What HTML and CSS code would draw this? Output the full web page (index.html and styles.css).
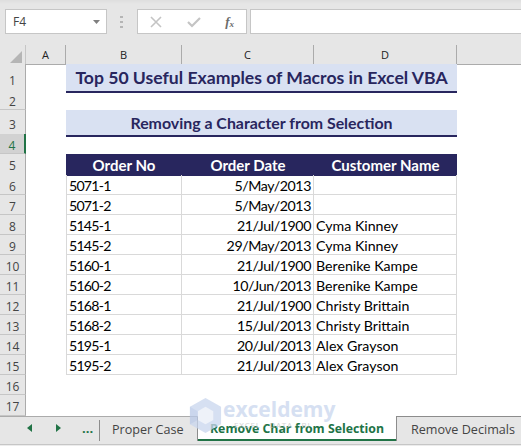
FILE: index.html
```html
<!DOCTYPE html>
<html lang="en">
<head>
  <meta charset="UTF-8" />
  <title>Remove Char from Selection</title>
  <link rel="stylesheet" href="styles.css">
</head>
<body>
  <!-- Formula bar -->
  <div class="formula-bar">
    <div class="name-box">
      <span>F4</span>
      <svg class="caret" width="7" height="4" viewBox="0 0 7 4"><path d="M0 0h7L3.5 4z" fill="#7f7f7f"/></svg>
    </div>
    <div class="grip"><i></i><i></i><i></i></div>
    <div class="fx-buttons">
      <svg width="12" height="12" viewBox="0 0 12 12"><path d="M1 1l10 10M11 1L1 11" stroke="#c4c4c4" stroke-width="1.6" fill="none"/></svg>
      <svg width="14" height="12" viewBox="0 0 14 12"><path d="M1 6l4 4 8-8" stroke="#c4c4c4" stroke-width="2.2" fill="none"/></svg>
      <span class="fx">f<sub>x</sub></span>
    </div>
    <div class="formula-input"></div>
  </div>

  <!-- Sheet -->
  <div class="sheet">
    <div class="row col-heads">
      <div class="corner"><svg width="12" height="12" viewBox="0 0 12 12"><path d="M12 0v12H0z" fill="#b5b5b5"/></svg></div>
      <div class="col-head">A</div>
      <div class="col-head">B</div>
      <div class="col-head">C</div>
      <div class="col-head">D</div>
    </div>

    <div class="row h26"><div class="num">1</div><div class="title">Top 50 Useful Examples of Macros in Excel VBA</div></div>
    <div class="row"><div class="num">2</div></div>
    <div class="row h24"><div class="num">3</div><div class="subtitle">Removing a Character from Selection</div></div>
    <div class="row"><div class="num active">4</div></div>
    <div class="row h21">
      <div class="num">5</div><div></div>
      <div class="th">Order No</div><div class="th">Order Date</div><div class="th">Customer Name</div>
    </div>

    <div class="row"><div class="num">6</div><div></div><div class="td order">5071-1</div><div class="td right">5/May/2013</div><div class="td"></div></div>
    <div class="row"><div class="num">7</div><div></div><div class="td order">5071-2</div><div class="td right">5/May/2013</div><div class="td"></div></div>
    <div class="row"><div class="num">8</div><div></div><div class="td order">5145-1</div><div class="td right">21/Jul/1900</div><div class="td">Cyma Kinney</div></div>
    <div class="row"><div class="num">9</div><div></div><div class="td order">5145-2</div><div class="td right">29/May/2013</div><div class="td">Cyma Kinney</div></div>
    <div class="row"><div class="num">10</div><div></div><div class="td order">5160-1</div><div class="td right">21/Jul/1900</div><div class="td">Berenike Kampe</div></div>
    <div class="row"><div class="num">11</div><div></div><div class="td order">5160-2</div><div class="td right">10/Jun/2013</div><div class="td">Berenike Kampe</div></div>
    <div class="row"><div class="num">12</div><div></div><div class="td order">5168-1</div><div class="td right">21/Jul/1900</div><div class="td">Christy Brittain</div></div>
    <div class="row"><div class="num">13</div><div></div><div class="td order">5168-2</div><div class="td right">15/Jul/2013</div><div class="td">Christy Brittain</div></div>
    <div class="row"><div class="num">14</div><div></div><div class="td order">5195-1</div><div class="td right">20/Jul/2013</div><div class="td">Alex Grayson</div></div>
    <div class="row"><div class="num">15</div><div></div><div class="td order">5195-2</div><div class="td right">21/Jul/2013</div><div class="td">Alex Grayson</div></div>

    <div class="row"><div class="num">16</div></div>
    <div class="row h21"><div class="num">17</div></div>
  </div>

  <!-- Sheet tabs -->
  <div class="tabs">
    <div class="tab-nav">
      <svg width="5" height="8" viewBox="0 0 5 8"><path d="M5 0v8L0 4z" fill="#217346"/></svg>
      <svg width="5" height="8" viewBox="0 0 5 8"><path d="M0 0v8l5-4z" fill="#217346"/></svg>
      <span class="more">...</span>
    </div>
    <div class="tab plain">Proper Case</div>
    <div class="tab active">Remove Char from Selection</div>
    <div class="tab raised">Remove Decimals</div>
  </div>
  <div class="status-bar"></div>

  <!-- Watermark -->
  <div class="watermark">
    <svg width="33" height="35" viewBox="0 0 32 36">
      <path d="M16 0l16 9v18l-16 9L0 27V9z" fill="#c9d6ee"/>
      <path d="M16 9l8 4.500v9L16 27l-8-4.500v-9z" fill="#e9eef8"/>
      <path d="M0 9l8 4.500v9L0 27z" fill="#b9c9e8"/>
    </svg>
    <div class="mark-text">
      <div class="mark-name">exceldemy</div>
      <div class="mark-sub">EXCEL · DATA · BI</div>
    </div>
  </div>
</body>
</html>
```

FILE: styles.css
```css
/* Global page styling */
html, body {
  margin: 0;
  padding: 0;
  background: #ffffff;
}

body {
  width: 521px;
  height: 446px;
  overflow: hidden;
  position: relative;
  font-family: 'Lato', sans-serif;
}

/* Formula bar */
.formula-bar {
  height: 45px;
  box-sizing: border-box;
  padding: 9px 0 11px 5px;
  background: linear-gradient(#dedede, #e6e6e6 4px);
  display: flex;
  align-items: stretch;
}

.name-box {
  width: 102px;
  box-sizing: border-box;
  background: #ffffff;
  border: 1px solid #c6c6c6;
  display: flex;
  align-items: center;
  justify-content: space-between;
  padding: 0 6px 0 7px;
  font-family: 'Open Sans', sans-serif;
  font-size: 12px;
  color: #444;
}

.grip {
  width: 3px;
  margin: 0 14px 0 13px;
  display: flex;
  flex-direction: column;
  justify-content: center;
  gap: 3px;
}

.grip i {
  display: block;
  width: 3px;
  height: 2px;
  background: #b5b5b5;
}

.fx-buttons {
  width: 110px;
  box-sizing: border-box;
  background: #ffffff;
  border: 1px solid #c6c6c6;
  display: flex;
  align-items: center;
  justify-content: space-between;
  padding: 0 12px;
}

.fx {
  font-family: 'Liberation Serif', serif;
  font-style: italic;
  font-size: 13px;
  font-weight: bold;
  color: #6b6b6b;
  line-height: 1;
}

.fx sub {
  font-size: 9px;
  vertical-align: -1px;
  line-height: 0;
}

.formula-input {
  flex: 1;
  margin-left: 3px;
  background: #ffffff;
  border: 1px solid #c6c6c6;
  border-right: none;
}

/* Sheet grid */
.sheet {
  height: 371px;
}

.row {
  display: grid;
  grid-template-columns: 26px 40px 116px 132px 143px 1fr;
  height: 20px;
  font-size: 14.2px;
  color: #000;
}

.h21 { height: 21px; }
.h24 { height: 24px; }
.h26 { height: 26px; }

.col-heads {
  height: 20px;
  margin-bottom: -1px;
  background: #e6e6e6;
  border-bottom: 1px solid #ababab;
  box-sizing: border-box;
}

.corner {
  display: flex;
  justify-content: flex-end;
  align-items: flex-end;
  padding: 0 3px 2px 0;
  border-right: 1px solid #c6c6c6;
  box-sizing: border-box;
}

.col-head {
  text-align: center;
  font-family: 'Open Sans', sans-serif;
  font-size: 11px;
  line-height: 20px;
  border-right: 1px solid #ababab;
  color: #222;
}

.num {
  grid-column: 1;
  background: #e6e6e6;
  border-right: 1px solid #ababab;
  border-bottom: 1px solid #c6c6c6;
  box-sizing: border-box;
  text-align: center;
  font-family: 'Open Sans', sans-serif;
  font-size: 12px;
  line-height: 23px;
  color: #444;
  height: 100%;
  overflow: hidden;
}

.h26 .num { line-height: 33px; }
.h24 .num { line-height: 30px; }

.num.active {
  background: #d2d2d2;
  border-right: 2px solid #217346;
  color: #217346;
}

.title, .subtitle {
  grid-column: 3 / 6;
  background: #d9e1f2;
  border-bottom: 2px solid #28265e;
  box-sizing: border-box;
  text-align: center;
  font-weight: bold;
  color: #28265e;
  white-space: nowrap;
}

.title {
  font-size: 17.600px;
  line-height: 27px;
}

.subtitle {
  font-size: 15.900px;
  line-height: 25px;
}

.th {
  background: #28265e;
  color: #ffffff;
  font-weight: bold;
  font-size: 15px;
  line-height: 22px;
  text-align: center;
}

.td {
  border-right: 1px solid #d9d9d9;
  border-bottom: 1px solid #d9d9d9;
  box-sizing: border-box;
  padding: 0 2px;
  line-height: 22px;
  white-space: nowrap;
  overflow: hidden;
}

.row > .td:nth-child(3) {
  border-left: 1px solid #d9d9d9;
}

/* Lato digits run wider than the sheet's, so tighten the numeric columns */
.order {
  letter-spacing: -0.800px;
}

.right {
  text-align: right;
  letter-spacing: -0.400px;
}

/* Sheet tabs */
.tabs {
  height: 28px;
  box-sizing: border-box;
  background: #e6e6e6;
  border-top: 1px solid #ababab;
  display: flex;
  align-items: flex-start;
  font-family: 'Open Sans', sans-serif;
  font-size: 12.600px;
  white-space: nowrap;
  color: #444;
}

.tab-nav {
  width: 100px;
  height: 24px;
  box-sizing: border-box;
  display: flex;
  align-items: center;
  padding: 0 0 2px 27px;
  gap: 24px;
  position: relative;
}

.tab-nav::after {
  content: "";
  position: absolute;
  right: 0;
  top: 3px;
  bottom: 0;
  width: 1px;
  background: #8c8c8c;
}

.more {
  margin-left: -3px;
  color: #217346;
  font-weight: bold;
  font-size: 13px;
  line-height: 14px;
}

.tab {
  line-height: 25px;
  box-sizing: border-box;
}

.tab.plain {
  width: 98px;
  height: 24px;
  padding-left: 12px;
  border-right: 1px solid #8c8c8c;
}

.tab.active {
  background: #ffffff;
  margin-top: -1px;
  width: 198px;
  height: 25px;
  padding-left: 12px;
  border-bottom: 2px solid #217346;
  font-weight: bold;
  color: #217346;
  font-size: 12.300px;
  line-height: 26px;
}

.tab.raised {
  flex: 1;
  margin-top: -1px;
  height: 25px;
  padding-left: 14px;
  border-top: 1px solid #8c8c8c;
  border-left: 1px solid #8c8c8c;
}

.status-bar {
  height: 2px;
  box-sizing: border-box;
  background: #ececec;
  border-top: 1px solid #c6c6c6;
}

/* Watermark */
.watermark {
  position: absolute;
  left: 189px;
  top: 398px;
  display: flex;
  gap: 1px;
  opacity: 0.75;
  pointer-events: none;
}

.mark-text {
  display: flex;
  flex-direction: column;
}

.mark-name {
  font-family: 'Open Sans', sans-serif;
  font-weight: bold;
  font-size: 21px;
  line-height: 22px;
  color: #c9d6ee;
}

.mark-sub {
  font-family: 'Open Sans', sans-serif;
  font-size: 8px;
  line-height: 10px;
  margin-left: 11px;
  letter-spacing: 0.800px;
  color: #c4c4c4;
}
```
